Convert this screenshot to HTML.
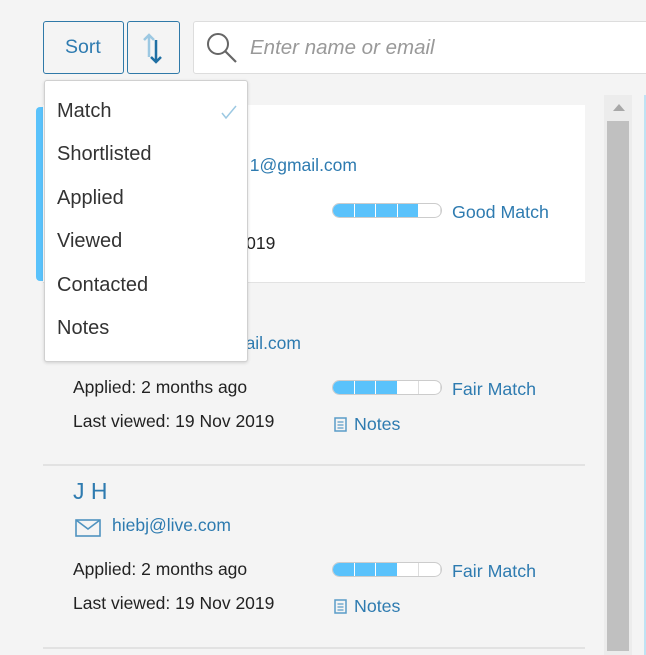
<!DOCTYPE html>
<html><head><meta charset="utf-8"><style>
*{box-sizing:border-box;margin:0;padding:0}
body{width:646px;height:647px;overflow:hidden;background:#f4f4f4;font-family:"Liberation Sans",Arial,sans-serif;position:relative}
.abs{position:absolute}
.btn{position:absolute;top:21px;height:53px;border:1px solid #2f79a8;border-radius:3px;background:#f4f4f4}
.search{position:absolute;left:193px;top:21px;width:470px;height:53px;background:#fff;border:1px solid #ddd;border-radius:3px}
.card{position:absolute;left:43px;width:542px;border-bottom:2px solid #e2e2e2}
.name{position:absolute;left:30px;font-size:23px;color:#2e7bb0}
.t{position:absolute;font-size:17.5px;color:#222;white-space:nowrap}
.em{position:absolute;font-size:17.5px;color:#2e7bb0;white-space:nowrap}
.bar{position:absolute;left:289px;width:110px;height:15px;border:1px solid #ccc;border-radius:8px;background:#fff;overflow:hidden;display:flex}
.bar i{display:block;width:22px;height:100%;border-right:1px solid #ddd}
.bar i.f{background:#5ac2fb;border-right:1px solid #fff}
.ml{position:absolute;left:409px;font-size:17.8px;color:#2e7bb0;white-space:nowrap}
.dd{position:absolute;left:44px;top:80px;width:204px;height:282px;background:#fff;border:1px solid #d0d0d0;border-radius:3px;box-shadow:0 1px 3px rgba(0,0,0,.15)}
.dd div{position:absolute;left:12px;font-size:20px;color:#333}
.h{color:transparent}
</style></head><body>
<div class="btn" style="left:43px;width:81px"><span class="abs" style="left:21px;top:14px;font-size:19.5px;color:#2e7bb0">Sort</span></div>
<div class="btn" style="left:127px;width:53px">
<svg class="abs" style="left:12px;top:8px" width="30" height="36" viewBox="0 0 30 36"><path d="M9 27V5M4 10l5-5 5 5" stroke="#9cc8e2" stroke-width="2.5" fill="none"/><path d="M16 10v22M11 27l5 5 5-5" stroke="#1f6fa3" stroke-width="2.5" fill="none"/></svg></div>
<div class="search">
<svg class="abs" style="left:12px;top:10px" width="34" height="32" viewBox="0 0 34 32"><circle cx="12" cy="12" r="10" stroke="#666" stroke-width="2" fill="none"/><path d="M19 19l11 11" stroke="#666" stroke-width="2.2"/></svg>
<span class="abs" style="left:56px;top:14px;font-size:20.5px;font-style:italic;color:#999;white-space:nowrap">Enter name or email</span></div>
<div class="abs" style="left:604px;top:95px;width:28px;height:560px;background:#ececec"></div>
<div class="abs" style="left:613px;top:104px;width:0;height:0;border-left:6px solid transparent;border-right:6px solid transparent;border-bottom:7px solid #a8a8a8"></div>
<div class="abs" style="left:607px;top:121px;width:22px;height:530px;background:#c0c0c0"></div>
<div class="abs" style="left:644px;top:95px;width:2px;height:560px;background:#bfe3f4"></div>

<div class="abs" style="left:36px;top:107px;width:10px;height:174px;background:#5ac2fb;border-radius:4px 0 0 4px"></div>
<div class="card" style="top:105px;height:178px;background:#fff;border-bottom:1px solid #e2e2e2">
<div class="name" style="top:12px">A B</div>
<div class="em" style="right:228px;top:50px"><span class="h">xxxxxxxxxxxx</span>1@gmail.com</div>
<div class="bar" style="top:98px"><i class="f"></i><i class="f"></i><i class="f"></i><i class="f"></i><i></i></div>
<div class="ml" style="top:97px">Good Match</div>
<div class="t" style="left:30px;top:94px">Applied: 2 months ago</div>
<div class="t" style="left:30px;top:128px">Last viewed: 19 Nov <span style="margin-left:1px"></span>2019</div>
</div>
<div class="card" style="top:283px;height:183px">
<div class="em" style="right:284px;top:50px"><span class="h">xxxxxxxxxxxx@gm</span>ail.com</div>
<div class="t" style="left:30px;top:94px">Applied: 2 months ago</div>
<div class="t" style="left:30px;top:128px">Last viewed: 19 Nov 2019</div>
<div class="bar" style="top:97px"><i class="f"></i><i class="f"></i><i class="f"></i><i></i><i></i></div>
<div class="ml" style="top:96px">Fair Match</div>
<svg class="abs" style="left:291px;top:134px" width="13" height="15" viewBox="0 0 13 15"><rect x="1" y="1" width="11" height="13" fill="none" stroke="#5a9cc8" stroke-width="1.5"/><path d="M3.5 5h6M3.5 8h6M3.5 11h6" stroke="#5a9cc8" stroke-width="1.3"/></svg>
<div class="ml" style="left:311px;top:131px">Notes</div>
</div>
<div class="card" style="top:466px;height:183px">
<div class="name" style="top:12px">J H</div>
<svg class="abs" style="left:32px;top:53px" width="26" height="18" viewBox="0 0 26 18"><rect x="1" y="1" width="24" height="16" fill="none" stroke="#4f93c0" stroke-width="1.6"/><path d="M1 1l12 9 12-9" fill="none" stroke="#4f93c0" stroke-width="1.6"/></svg>
<div class="em" style="left:69px;top:49px">hiebj@live.com</div>
<div class="t" style="left:30px;top:93px">Applied: 2 months ago</div>
<div class="t" style="left:30px;top:127px">Last viewed: 19 Nov 2019</div>
<div class="bar" style="top:96px"><i class="f"></i><i class="f"></i><i class="f"></i><i></i><i></i></div>
<div class="ml" style="top:95px">Fair Match</div>
<svg class="abs" style="left:291px;top:133px" width="13" height="15" viewBox="0 0 13 15"><rect x="1" y="1" width="11" height="13" fill="none" stroke="#5a9cc8" stroke-width="1.5"/><path d="M3.5 5h6M3.5 8h6M3.5 11h6" stroke="#5a9cc8" stroke-width="1.3"/></svg>
<div class="ml" style="left:311px;top:130px">Notes</div>
</div>

<div class="dd">
<div style="top:19px">Match</div>
<svg class="abs" style="left:176px;top:24px" width="16" height="14" viewBox="0 0 16 14"><path d="M1 8l4 5L15 1" fill="none" stroke="#9cc8e2" stroke-width="1.5"/></svg>
<div style="top:62px">Shortlisted</div>
<div style="top:106px">Applied</div>
<div style="top:149px">Viewed</div>
<div style="top:193px">Contacted</div>
<div style="top:236px">Notes</div>
</div>
</body></html>
